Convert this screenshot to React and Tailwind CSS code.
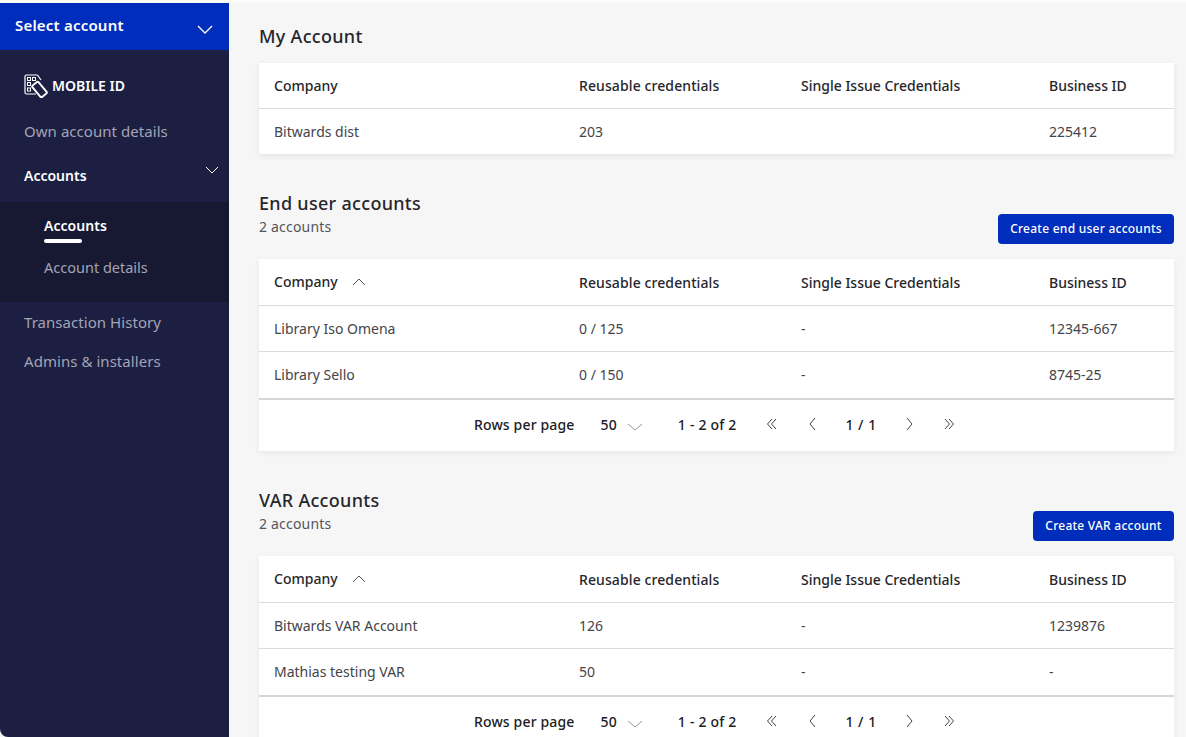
import React from "react";

const font = "font-['Noto_Sans','Open_Sans',sans-serif]";
const cols = "grid grid-cols-[305px_222px_248px_1fr] px-[15px] items-center";

function Chev({ dir = "down", w = 16, h = 9, color = "currentColor", sw = 1.2, className = "" }) {
  const d = dir === "down" ? `M1 1 L${w / 2} ${h - 1} L${w - 1} 1` : `M1 ${h - 1} L${w / 2} 1 L${w - 1} ${h - 1}`;
  return (
    <svg width={w} height={h} viewBox={`0 0 ${w} ${h}`} fill="none" className={className}>
      <path d={d} stroke={color} strokeWidth={sw} />
    </svg>
  );
}

function Side({ d }) {
  return (
    <svg width="12" height="14" viewBox="0 0 12 14" fill="none">
      <path d={d} stroke="#444" strokeWidth="1" />
    </svg>
  );
}

function Logo() {
  return (
    <svg width="24" height="24" viewBox="0 0 24 24" fill="none" stroke="#fff" strokeWidth="1.2">
      <path d="M13.5 1H2.5A1.5 1.5 0 0 0 1 2.5v16A1.5 1.5 0 0 0 2.5 20H12" />
      <path d="M13.5 1l3.5 5" />
      <rect x="3.5" y="3.5" width="3" height="3" strokeWidth="1" />
      <rect x="8.5" y="3.5" width="3" height="3" strokeWidth="1" />
      <rect x="3.5" y="8.5" width="3" height="3" strokeWidth="1" />
      <rect x="3.5" y="14" width="3" height="3" strokeWidth="1" />
      <rect x="8" y="11.5" width="15" height="8" rx="1.5" transform="rotate(50 15.5 15.5)" fill="#1c1f42" strokeWidth="1.9" />
    </svg>
  );
}

function Header({ first, sort, lower }) {
  return (
    <div className={`${cols} ${lower ? "h-[47px] pt-[1px]" : "h-[46px]"} text-sm font-medium text-[#26262b] border-b border-[#dcdcdc]`}>
      <div className={`flex items-center gap-[14px] ${lower ? "-mt-[1px]" : ""}`}>
        <span>{first}</span>
        {sort && <Chev dir="up" w={14} h={8} color="#555" sw={1} />}
      </div>
      <div className="tracking-[0.1px]">Reusable credentials</div>
      <div>Single Issue Credentials</div>
      <div>Business ID</div>
    </div>
  );
}

function Row({ cells, last, lower }) {
  return (
    <div className={`${cols} ${last && !lower ? "h-[45px]" : "h-[46px]"} text-sm text-[#444449] ${lower && !last ? "pt-[1px]" : ""} ${last ? "" : "border-b border-[#dcdcdc]"}`}>
      {cells.map((c, i) => (
        <div key={i}>{c}</div>
      ))}
    </div>
  );
}

function Pagination() {
  return (
    <div className="h-[53px] border-t-2 border-[#d6d6d6] flex items-center text-sm font-medium tracking-[0.15px] text-[#202024] pb-[1px]">
      <span className="ml-[215px]">Rows per page</span>
      <span className="ml-[26px]">50</span>
      <Chev className="ml-[10px] mt-[3px]" w={16} h={8} color="#888" sw={0.9} />
      <span className="ml-[35px] tracking-[0.2px]">1 - 2 of 2</span>
      <span className="ml-[30px] -mt-[2px]">
        <Side d="M6 2 L1.5 7 L6 12 M10 2 L5.5 7 L10 12" />
      </span>
      <span className="ml-[29px] -mt-[2px]">
        <Side d="M8 1 L3 7 L8 13" />
      </span>
      <span className="ml-[26px] tracking-[0.5px]">1 / 1</span>
      <span className="ml-[27px] -mt-[2px]">
        <Side d="M3 1 L8 7 L3 13" />
      </span>
      <span className="ml-[27px] -mt-[2px]">
        <Side d="M2 2 L6.5 7 L2 12 M6 2 L10.5 7 L6 12" />
      </span>
    </div>
  );
}

function Section({ title, button, btnW, rows }) {
  return (
    <section className="mt-[30px]">
      <div className="flex justify-between items-end h-[60px]">
        <div className="mb-[7px]">
          <h2 className="text-lg font-medium tracking-[0.3px] text-[#26262b] leading-[26px] mb-[1px]">{title}</h2>
          <p className="text-sm tracking-[0.2px] text-[#55555a] leading-[20px]">2 accounts</p>
        </div>
        <button className={`${btnW} h-[30px] rounded bg-[#002dbb] text-white text-xs font-medium tracking-[0.25px]`}>{button}</button>
      </div>
      <div className="mt-[15px] bg-white shadow-[0_2px_6px_rgba(0,0,0,0.06)]">
        <Header first="Company" sort lower />
        <Row cells={rows[0]} lower />
        <Row cells={rows[1]} last lower />
        <Pagination />
      </div>
    </section>
  );
}

const item = "pl-[24px] text-[15px] tracking-[0.05px] text-[#a3a4b4] leading-[20px]";

export default function App() {
  return (
    <div className={`${font} w-[1186px] h-[737px] overflow-hidden bg-[#f6f6f7] flex flex-col`}>
      <div className="h-[3px] bg-[#fbfbfb] shrink-0" />
      <div className="flex flex-1 min-h-0">
        <aside className="w-[229px] shrink-0 bg-[#1c1f42] rounded-bl-[8px] flex flex-col">
          <div className="h-[47px] bg-[#002dbb] flex items-center justify-between pl-[15px] pr-[16px] text-white">
            <span className="text-[15px] font-semibold tracking-[0.2px] pb-[3px]">Select account</span>
            <Chev className="mt-[6px]" w={16} h={9} color="#fff" sw={1.3} />
          </div>
          <div className="flex items-center gap-[4px] pl-[24px] mt-[24px] h-[24px] text-white text-sm font-semibold">
            <Logo />
            <span>MOBILE ID</span>
          </div>
          <div className={`${item} mt-[23px]`}>Own account details</div>
          <div className="pl-[24px] pr-[10px] mt-[25px] flex justify-between text-sm font-semibold text-white leading-[20px]">
            <span>Accounts</span>
            <Chev className="mt-0" w={14} h={8} color="#fff" sw={1} />
          </div>
          <div className="mt-[16px] h-[100px] bg-[#171933] pl-[44px] pt-[14px]">
            <div className="text-sm font-semibold tracking-[0.05px] text-white leading-[20px]">Accounts</div>
            <div className="w-[38px] h-[4px] rounded-full bg-white mt-[3px]" />
            <div className="text-[14.5px] text-[#a3a4b4] leading-[20px] mt-[14px]">Account details</div>
          </div>
          <div className={`${item} mt-[10px]`}>Transaction History</div>
          <div className={`${item} mt-[19px]`}>Admins &amp; installers</div>
        </aside>
        <main className="flex-1 pl-[30px] pr-[12px] min-w-0">
          <h2 className="text-lg font-medium tracking-[0.3px] text-[#26262b] leading-[26px] mt-[20px]">My Account</h2>
          <div className="mt-[14px] bg-white shadow-[0_2px_6px_rgba(0,0,0,0.08)]">
            <Header first="Company" />
            <Row cells={["Bitwards dist", "203", "", "225412"]} last />
          </div>
          <Section
            title="End user accounts"
            button="Create end user accounts"
            btnW="w-[176px]"
            rows={[
              ["Library Iso Omena", "0 / 125", "-", "12345-667"],
              ["Library Sello", "0 / 150", "-", "8745-25"],
            ]}
          />
          <Section
            title="VAR Accounts"
            button="Create VAR account"
            btnW="w-[141px]"
            rows={[
              ["Bitwards VAR Account", "126", "-", "1239876"],
              ["Mathias testing VAR", "50", "-", "-"],
            ]}
          />
        </main>
      </div>
    </div>
  );
}
